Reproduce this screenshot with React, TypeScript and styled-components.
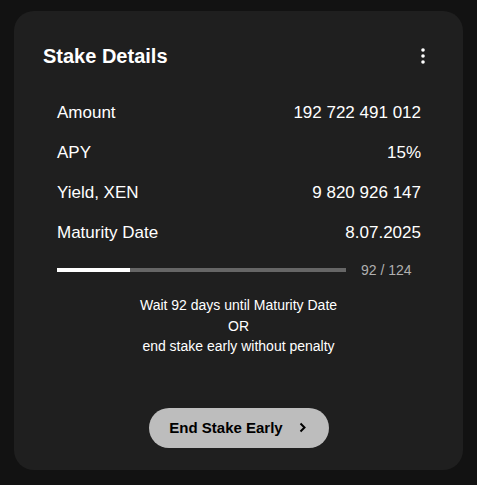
import React from 'react';
import styled, { createGlobalStyle } from 'styled-components';

const GlobalStyle = createGlobalStyle`
  body {
    margin: 0;
    background: #121212;
    font-family: 'Liberation Sans', Arial, sans-serif;
    color: #fff;
  }
`;

const Page = styled.div`
  padding: 11px 14px;
`;

const Card = styled.section`
  width: 449px;
  height: 459px;
  box-sizing: border-box;
  background: #1f1f1f;
  border-radius: 20px;
  padding: 33px 29px 22px;
  display: flex;
  flex-direction: column;
`;

const Header = styled.div`
  display: flex;
  align-items: center;
  justify-content: space-between;
  height: 24px;

  h2 {
    margin: 0;
    font-size: 20px;
    font-weight: 700;
    line-height: 24px;
  }
`;

const MenuButton = styled.button`
  border: none;
  background: none;
  padding: 0;
  margin-right: -9px;
  width: 40px;
  height: 24px;
  display: flex;
  align-items: center;
  justify-content: center;
  color: #fff;
  cursor: pointer;
`;

const Details = styled.div`
  margin-top: 25px;
  padding: 0 13px 0 14px;
`;

const Row = styled.div`
  display: flex;
  justify-content: space-between;
  align-items: center;
  height: 40px;
  font-size: 17px;
`;

const Progress = styled.div`
  display: flex;
  align-items: center;
  gap: 15px;
  height: 20px;
  margin-top: 7px;
`;

const Track = styled.div`
  flex: 1;
  height: 4px;
  background: #666;
`;

const Fill = styled.div`
  height: 100%;
  background: #fff;
`;

const ProgressLabel = styled.span`
  width: 60px;
  font-size: 14px;
  color: #b0b0b0;
`;

const Message = styled.p`
  margin: 15px 0 0;
  text-align: center;
  font-size: 14px;
  line-height: 20.5px;
`;

const EndButton = styled.button`
  align-self: center;
  margin-top: 51px;
  width: 180px;
  height: 41px;
  border: none;
  border-radius: 21px;
  background: #bdbdbd;
  color: #000;
  font-family: 'Liberation Sans', Arial, sans-serif;
  font-size: 15px;
  font-weight: 700;
  display: flex;
  align-items: center;
  justify-content: center;
  gap: 16px;
  padding: 0 2px 0 0;
  cursor: pointer;
`;

const rows = [
  { label: 'Amount', value: '192 722 491 012' },
  { label: 'APY', value: '15%' },
  { label: 'Yield, XEN', value: '9 820 926 147' },
  { label: 'Maturity Date', value: '8.07.2025' },
];

const daysLeft = 92;
const totalDays = 124;

const App: React.FC = () => {
  return (
    <Page>
      <GlobalStyle />
      <Card>
        <Header>
          <h2>Stake Details</h2>
          <MenuButton aria-label="more">
            <svg width="24" height="24" viewBox="0 0 24 24" fill="currentColor">
              <circle cx="12" cy="6" r="1.8" />
              <circle cx="12" cy="12" r="1.8" />
              <circle cx="12" cy="18" r="1.8" />
            </svg>
          </MenuButton>
        </Header>

        <Details>
          {rows.map((row) => (
            <Row key={row.label}>
              <span>{row.label}</span>
              <span>{row.value}</span>
            </Row>
          ))}
          <Progress>
            <Track>
              <Fill style={{ width: `${((totalDays - daysLeft) / totalDays) * 100 - 0.6}%` }} />
            </Track>
            <ProgressLabel>{daysLeft} / {totalDays}</ProgressLabel>
          </Progress>
        </Details>

        <Message>
          Wait {daysLeft} days until Maturity Date
          <br />
          OR
          <br />
          end stake early without penalty
        </Message>

        <EndButton>
          End Stake Early
          <svg width="7" height="11" viewBox="0 0 7 11" fill="none" stroke="currentColor" strokeWidth="2">
            <path d="M1.5 1.5l4 4-4 4" />
          </svg>
        </EndButton>
      </Card>
    </Page>
  );
};

export default App;
